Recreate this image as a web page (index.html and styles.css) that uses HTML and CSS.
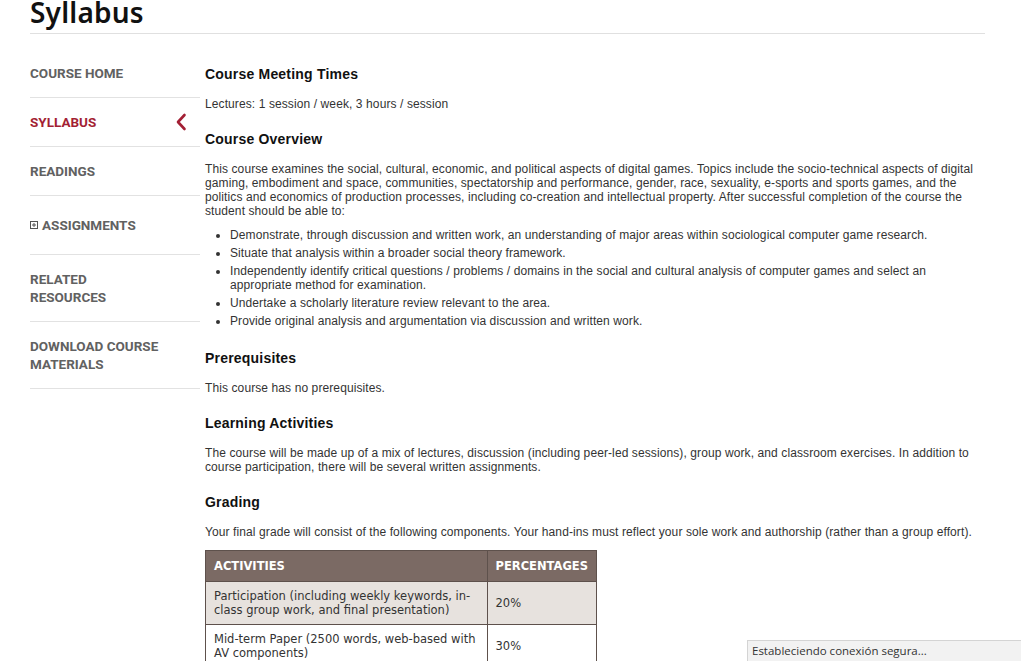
FILE: index.html
```html
<!DOCTYPE html>
<html lang="en">
<head>
<meta charset="utf-8">
<title>Syllabus</title>
<link rel="stylesheet" href="styles.css">
</head>
<body>
<div class="page">
  <header class="page-header">
    <h1 class="page-title">Syllabus</h1>
  </header>
  <div class="layout">
    <nav class="sidebar">
      <a class="nav-item" href="#">COURSE HOME</a>
      <a class="nav-item active" href="#">SYLLABUS
        <svg class="chev" width="12" height="18" viewBox="0 0 12 18"><path d="M9.5 2 L3 9 L9.5 16" fill="none" stroke="#a31f34" stroke-width="2.6" stroke-linecap="round" stroke-linejoin="round"/></svg>
      </a>
      <a class="nav-item" href="#">READINGS</a>
      <a class="nav-item tall" href="#"><span class="plusbox"><svg width="8" height="8" viewBox="0 0 8 8"><rect x="0.5" y="0.5" width="7" height="7" fill="none" stroke="#555" stroke-width="1"/><path d="M2 4 H6 M4 2 V6" stroke="#555" stroke-width="1"/></svg></span>ASSIGNMENTS</a>
      <a class="nav-item" href="#">RELATED<br>RESOURCES</a>
      <a class="nav-item" href="#">DOWNLOAD COURSE<br>MATERIALS</a>
    </nav>
    <main class="content">
      <h2>Course Meeting Times</h2>
      <p>Lectures: 1 session / week, 3 hours / session</p>
      <h2>Course Overview</h2>
      <p class="intro">This course examines the social, cultural, economic, and political aspects of digital games. Topics include the socio-technical aspects of digital gaming, embodiment and space, communities, spectatorship and performance, gender, race, sexuality, e-sports and sports games, and the politics and economics of production processes, including co-creation and intellectual property. After successful completion of the course the student should be able to:</p>
      <ul class="goals">
        <li>Demonstrate, through discussion and written work, an understanding of major areas within sociological computer game research.</li>
        <li>Situate that analysis within a broader social theory framework.</li>
        <li>Independently identify critical questions / problems / domains in the social and cultural analysis of computer games and select an appropriate method for examination.</li>
        <li>Undertake a scholarly literature review relevant to the area.</li>
        <li>Provide original analysis and argumentation via discussion and written work.</li>
      </ul>
      <h2>Prerequisites</h2>
      <p>This course has no prerequisites.</p>
      <h2>Learning Activities</h2>
      <p>The course will be made up of a mix of lectures, discussion (including peer-led sessions), group work, and classroom exercises. In addition to course participation, there will be several written assignments.</p>
      <h2>Grading</h2>
      <p class="pre-table">Your final grade will consist of the following components. Your hand-ins must reflect your sole work and authorship (rather than a group effort).</p>
      <table class="grades">
        <thead>
          <tr><th class="col-a">ACTIVITIES</th><th class="col-b">PERCENTAGES</th></tr>
        </thead>
        <tbody>
          <tr class="alt"><td>Participation (including weekly keywords, in-class group work, and final presentation)</td><td>20%</td></tr>
          <tr><td>Mid-term Paper (2500 words, web-based with AV components)</td><td>30%</td></tr>
        </tbody>
      </table>
    </main>
  </div>
</div>
<div class="status">Estableciendo conexión segura...</div>
</body>
</html>
```

FILE: styles.css
```css
* { box-sizing: border-box; }
html, body { margin: 0; padding: 0; background: #fff; }
body { font-family: "Liberation Sans", Arial, sans-serif; color: #333; overflow: hidden; height: 661px; }

.page { width: 955px; margin-left: 30px; }

.page-header { border-bottom: 1px solid #e0e0e0; padding-bottom: 8px; }
.page-title {
  margin: 0;
  font-family: "Noto Sans", sans-serif;
  font-weight: 600;
  font-size: 28px;
  line-height: 25px;
  color: #111;
  letter-spacing: 0.2px;
}

.layout { display: flex; gap: 5px; align-items: flex-start; }

.sidebar { width: 170px; flex: none; display: flex; flex-direction: column; padding-top: 15px; }
.nav-item {
  display: flex;
  align-items: center;
  position: relative;
  padding: 15px 0;
  line-height: 18px;
  font-family: Roboto, sans-serif;
  font-weight: 700;
  font-size: 13.5px;
  color: #616161;
  text-decoration: none;
  border-bottom: 1px solid #e2e2e2;
}
.nav-item.active { color: #a31f34; justify-content: space-between; padding-right: 13px; }
.nav-item.tall { padding: 20px 0; }
.chev { display: block; }
.plusbox { display: inline-flex; margin-right: 4px; }

.content { flex: 1; padding-top: 31px; padding-right: 8px; }
.content h2 {
  margin: 0 0 14px;
  font-size: 14px;
  line-height: 18px;
  font-weight: 700;
  color: #111;
  letter-spacing: 0.2px;
}
.content p { margin: 0 0 19px; font-size: 12px; line-height: 14px; color: #333; letter-spacing: 0.1px; }
.content p.intro { margin-top: 2px; margin-bottom: 10px; }
.content p.pre-table { margin-bottom: 11px; }

.goals { margin: 0 0 21px; padding-left: 25px; font-size: 12px; line-height: 14px; color: #333; letter-spacing: 0.1px; }
.goals li { margin-bottom: 4px; }

.grades {
  border-collapse: collapse;
  width: 392px;
  font-family: "DejaVu Sans", Verdana, sans-serif;
  font-size: 11.5px;
  line-height: 14px;
  color: #333;
}
.grades th, .grades td { border: 1px solid #5e514c; text-align: left; }
.grades th {
  background: #7b6a64;
  color: #fff;
  font-weight: 700;
  font-size: 11.5px;
  padding: 8px 8px;
  height: 31px;
  white-space: nowrap;
}
.grades .col-a { width: 282px; }
.grades td { padding: 7px 8px; height: 42px; vertical-align: middle; }
.grades tr.alt td { background: #e7e2de; }

.status {
  position: fixed;
  right: 0;
  bottom: 0;
  width: 274px;
  height: 21px;
  padding: 2px 0 0 4px;
  background: #f2f2f2;
  border-top: 1px solid #d4d4d4;
  border-left: 1px solid #d4d4d4;
  font-family: "Open Sans", sans-serif;
  font-size: 11.5px;
  line-height: 16px;
  color: #333;
}
```
